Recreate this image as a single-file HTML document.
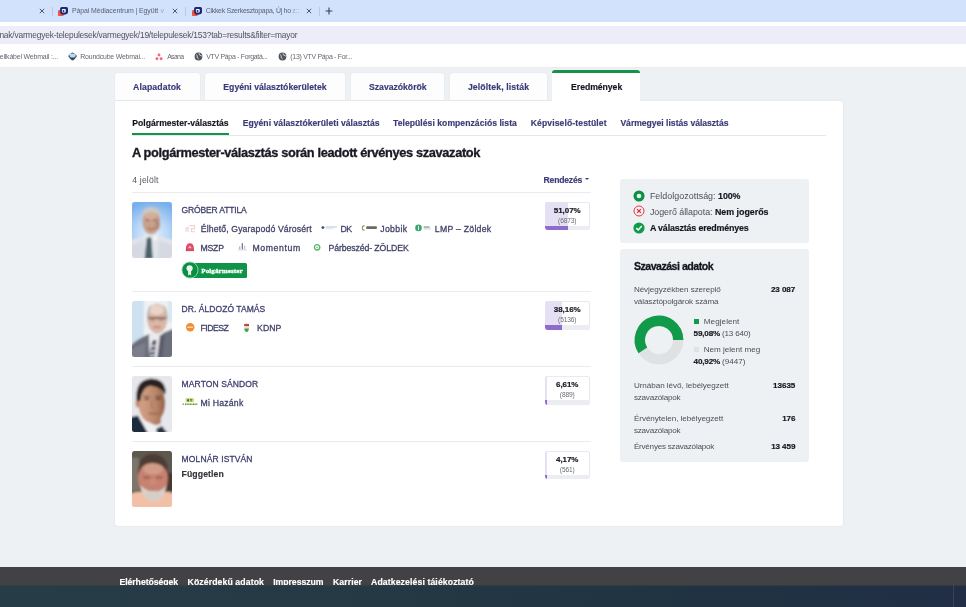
<!DOCTYPE html>
<html lang="hu"><head><meta charset="utf-8"><title>Eredmények</title><style>html,body{margin:0;padding:0}
body{width:966px;height:607px;position:relative;overflow:hidden;background:#fff;font-family:"Liberation Sans",sans-serif;}
#r{position:absolute;left:0;top:0;width:966px;height:607px;overflow:hidden;will-change:transform}
#r div,#r svg{position:absolute;display:block}
#r .t{white-space:nowrap;}
#r .t span{position:static}
</style></head><body><div id="r">
<div style="left:0.00px;top:0.00px;width:966.00px;height:21.50px;background:#d3e2fc;"></div>
<div style="left:0.00px;top:21.50px;width:966.00px;height:45.50px;background:#ffffff;"></div>
<div style="left:0.00px;top:26.20px;width:966.00px;height:18.20px;background:#ecedf8;"></div>
<svg style="left:37.60px;top:7.30px;" width="8" height="8" viewBox="0 0 8 8"><path d="M1.7999999999999998 1.7999999999999998L6.2 6.2M6.2 1.7999999999999998L1.7999999999999998 6.2" stroke="#46506a" stroke-width="0.95" fill="none"/></svg>
<svg style="left:171.20px;top:7.30px;" width="8" height="8" viewBox="0 0 8 8"><path d="M1.7999999999999998 1.7999999999999998L6.2 6.2M6.2 1.7999999999999998L1.7999999999999998 6.2" stroke="#46506a" stroke-width="0.95" fill="none"/></svg>
<svg style="left:304.80px;top:7.30px;" width="8" height="8" viewBox="0 0 8 8"><path d="M1.7999999999999998 1.7999999999999998L6.2 6.2M6.2 1.7999999999999998L1.7999999999999998 6.2" stroke="#46506a" stroke-width="0.95" fill="none"/></svg>
<div style="left:51.50px;top:7.40px;width:1.00px;height:8.20px;background:#c3c4e8;"></div>
<div style="left:185.30px;top:7.40px;width:1.00px;height:8.20px;background:#c3c4e8;"></div>
<div style="left:318.50px;top:7.40px;width:1.00px;height:8.20px;background:#c3c4e8;"></div>
<svg style="left:58.30px;top:6.80px;" width="10.5" height="9.5" viewBox="0 0 10.5 9.5"><rect x="0" y="2.9" width="5.6" height="6.3" rx="1.3" fill="#ee5346"/><path d="M2.100 1.600Q2.100 0 3.700 0H8.400Q10 0 10 1.600V5.200Q10 6.500 8.800 6.900L6.200 7.700Q2.100 7.900 2.100 4.800Z" fill="#1b2a6e"/><rect x="3.900" y="2" width="3.800" height="3.600" rx="0.800" fill="#ffffff"/><circle cx="5.500" cy="4.100" r="1" fill="#1b2a6e"/></svg>
<svg style="left:191.70px;top:6.80px;" width="10.5" height="9.5" viewBox="0 0 10.5 9.5"><rect x="0" y="2.9" width="5.6" height="6.3" rx="1.3" fill="#ee5346"/><path d="M2.100 1.600Q2.100 0 3.700 0H8.400Q10 0 10 1.600V5.200Q10 6.500 8.800 6.900L6.200 7.700Q2.100 7.900 2.100 4.800Z" fill="#1b2a6e"/><rect x="3.900" y="2" width="3.800" height="3.600" rx="0.800" fill="#ffffff"/><circle cx="5.500" cy="4.100" r="1" fill="#1b2a6e"/></svg>
<div class="t" style="left:71.90px;top:6.09px;font-size:6.95px;line-height:10px;color:#5a6071;letter-spacing:-0.101px;">Pápai Médiacentrum | Együtt</div>
<div class="t" style="left:160.50px;top:6.09px;font-size:6.95px;line-height:10px;color:#9aa6c4;">v</div>
<div class="t" style="left:205.70px;top:6.09px;font-size:6.95px;line-height:10px;color:#5a6071;letter-spacing:-0.267px;">Cikkek Szerkesztopapa, Új ho</div>
<div class="t" style="left:292.30px;top:6.09px;font-size:6.95px;line-height:10px;color:#9aa6c4;">z::</div>
<svg style="left:325.30px;top:7.30px;" width="8" height="8" viewBox="0 0 8 8"><path d="M4 0.6V7.4M0.6 4H7.4" stroke="#39404f" stroke-width="1.1" fill="none"/></svg>
<div class="t" style="left:-0.60px;top:28.99px;font-size:8.4px;line-height:12px;color:#50535b;letter-spacing:-0.195px;">nak/varmegyek-telepulesek/varmegyek/19/telepulesek/153?tab=results&amp;filter=mayor</div>
<div class="t" style="left:-0.30px;top:51.99px;font-size:6.95px;line-height:10px;color:#63676f;letter-spacing:-0.178px;">ellkábel Webmail :...</div>
<svg style="left:67.60px;top:51.60px;" width="9.5" height="9.5" viewBox="0 0 9.5 9.5"><path d="M4.6 0.6Q5.4 0.6 8.4 3.2Q9.200 4 8.400 4.900Q5.600 8.400 4.600 8.400T0.800 4.900Q0 4 0.800 3.200Q3.800 0.600 4.600 0.600Z" fill="#2d4a68"/><ellipse cx="4.600" cy="3.500" rx="3.100" ry="2" fill="#bcd8ef"/></svg>
<div class="t" style="left:80.30px;top:51.99px;font-size:6.95px;line-height:10px;color:#63676f;letter-spacing:-0.202px;">Roundcube Webmai...</div>
<svg style="left:154.60px;top:52.50px;" width="8" height="8" viewBox="0 0 8 8"><circle cx="4" cy="2" r="1.45" fill="#ee6a78"/><circle cx="1.9" cy="5.7" r="1.45" fill="#ee6a78"/><circle cx="6.1" cy="5.7" r="1.45" fill="#ee6a78"/></svg>
<div class="t" style="left:167.20px;top:51.99px;font-size:6.95px;line-height:10px;color:#63676f;letter-spacing:-0.702px;">Asana</div>
<svg style="left:193.50px;top:51.80px;" width="9" height="9" viewBox="0 0 9 9"><circle cx="4.5" cy="4.5" r="3.9" fill="#50545b"/><path d="M2.2 2.6Q3.6 3.4 3.2 4.6T4.6 6.9M5.2 1.2Q4.6 2.6 6 3.2T7.9 4.2" stroke="#fff" stroke-width="0.8" fill="none"/></svg>
<div class="t" style="left:206.30px;top:51.99px;font-size:6.95px;line-height:10px;color:#63676f;letter-spacing:-0.305px;">VTV Pápa - Forgatá...</div>
<svg style="left:277.70px;top:51.80px;" width="9" height="9" viewBox="0 0 9 9"><circle cx="4.5" cy="4.5" r="3.9" fill="#50545b"/><path d="M2.2 2.6Q3.6 3.4 3.2 4.6T4.6 6.9M5.2 1.2Q4.6 2.6 6 3.2T7.9 4.2" stroke="#fff" stroke-width="0.8" fill="none"/></svg>
<div class="t" style="left:290.30px;top:51.99px;font-size:6.95px;line-height:10px;color:#63676f;letter-spacing:-0.285px;">(13) VTV Pápa - For...</div>
<div style="left:0.00px;top:67.00px;width:966.00px;height:500.00px;background:#eef1f4;"></div>
<div style="left:0.00px;top:66.70px;width:966.00px;height:2.60px;background:linear-gradient(#ececec,#eef1f4);"></div>
<div style="left:115.40px;top:72.50px;width:84.20px;height:27.90px;background:#fdfdfe;border-radius:3px 3px 0 0;box-shadow:0 0 1.5px rgba(60,70,100,.13);"></div>
<div class="t" style="left:133.00px;top:81.09px;font-size:8.7px;line-height:12px;color:#3b3b78;font-weight:700;-webkit-text-stroke:0.16px currentColor;letter-spacing:0.123px;">Alapadatok</div>
<div style="left:205.00px;top:72.50px;width:139.90px;height:27.90px;background:#fdfdfe;border-radius:3px 3px 0 0;box-shadow:0 0 1.5px rgba(60,70,100,.13);"></div>
<div class="t" style="left:223.30px;top:81.09px;font-size:8.7px;line-height:12px;color:#3b3b78;font-weight:700;-webkit-text-stroke:0.16px currentColor;letter-spacing:-0.004px;">Egyéni választókerületek</div>
<div style="left:350.80px;top:72.50px;width:93.60px;height:27.90px;background:#fdfdfe;border-radius:3px 3px 0 0;box-shadow:0 0 1.5px rgba(60,70,100,.13);"></div>
<div class="t" style="left:369.00px;top:81.09px;font-size:8.7px;line-height:12px;color:#3b3b78;font-weight:700;-webkit-text-stroke:0.16px currentColor;letter-spacing:-0.030px;">Szavazókörök</div>
<div style="left:450.40px;top:72.50px;width:96.90px;height:27.90px;background:#fdfdfe;border-radius:3px 3px 0 0;box-shadow:0 0 1.5px rgba(60,70,100,.13);"></div>
<div class="t" style="left:467.90px;top:81.09px;font-size:8.7px;line-height:12px;color:#3b3b78;font-weight:700;-webkit-text-stroke:0.16px currentColor;letter-spacing:0.121px;">Jelöltek, listák</div>
<div style="left:115.40px;top:100.60px;width:727.50px;height:425.00px;background:#fff;border-radius:0 3px 3px 3px;box-shadow:0 0 2px rgba(60,70,100,.13);"></div>
<div style="left:552.40px;top:69.60px;width:87.90px;height:32.40px;background:#fff;border-radius:3px 3px 0 0;border-top:3px solid #15934a;box-sizing:border-box;"></div>
<div class="t" style="left:571.10px;top:81.09px;font-size:8.7px;line-height:12px;color:#15151f;font-weight:700;-webkit-text-stroke:0.16px currentColor;letter-spacing:-0.061px;">Eredmények</div>
<div style="left:132.30px;top:134.50px;width:694.00px;height:1.00px;background:#e4e6ea;"></div>
<div style="left:132.30px;top:132.50px;width:96.50px;height:2.70px;background:#15934a;"></div>
<div class="t" style="left:132.30px;top:117.32px;font-size:8.6px;line-height:12px;color:#15151f;font-weight:700;-webkit-text-stroke:0.16px currentColor;letter-spacing:0.015px;">Polgármester-választás</div>
<div class="t" style="left:242.70px;top:117.32px;font-size:8.6px;line-height:12px;color:#3b3b78;font-weight:700;-webkit-text-stroke:0.16px currentColor;letter-spacing:0.036px;">Egyéni választókerületi választás</div>
<div class="t" style="left:393.00px;top:117.32px;font-size:8.6px;line-height:12px;color:#3b3b78;font-weight:700;-webkit-text-stroke:0.16px currentColor;letter-spacing:0.044px;">Települési kompenzációs lista</div>
<div class="t" style="left:530.70px;top:117.32px;font-size:8.6px;line-height:12px;color:#3b3b78;font-weight:700;-webkit-text-stroke:0.16px currentColor;letter-spacing:0.113px;">Képviselő-testület</div>
<div class="t" style="left:620.40px;top:117.32px;font-size:8.6px;line-height:12px;color:#3b3b78;font-weight:700;-webkit-text-stroke:0.16px currentColor;letter-spacing:-0.013px;">Vármegyei listás választás</div>
<div class="t" style="left:132.00px;top:144.26px;font-size:12.8px;line-height:18px;color:#191922;font-weight:700;-webkit-text-stroke:0.16px currentColor;letter-spacing:-0.356px;-webkit-text-stroke:0.32px #191922;">A polgármester-választás során leadott érvényes szavazatok</div>
<div class="t" style="left:132.20px;top:173.52px;font-size:8.6px;line-height:12px;color:#55575e;letter-spacing:0.206px;">4 jelölt</div>
<div class="t" style="left:543.60px;top:173.52px;font-size:8.6px;line-height:12px;color:#3b3b78;font-weight:700;-webkit-text-stroke:0.16px currentColor;letter-spacing:-0.207px;">Rendezés</div>
<svg style="left:584.00px;top:177.30px;" width="6" height="5" viewBox="0 0 6 5"><path d="M1 1H5L3 3.1Z" fill="#3b3b78"/></svg>
<div style="left:132.30px;top:191.80px;width:458.60px;height:1.30px;background:#e9ebef;"></div>
<div style="left:132.30px;top:291.00px;width:458.60px;height:1.30px;background:#e9ebef;"></div>
<div style="left:132.30px;top:365.80px;width:458.60px;height:1.30px;background:#e9ebef;"></div>
<div style="left:132.30px;top:440.60px;width:458.60px;height:1.30px;background:#e9ebef;"></div>
<div style="left:544.8px;top:201.7px;width:44.9px;height:28.6px;border-radius:3px;overflow:hidden;background:#fff;box-shadow:inset 0 0 0 0.8px #e3e1ee;"><div style="left:0;top:0;width:23.30px;height:28.6px;background:#e5e0f3"></div><div style="left:0;top:24.200000000000003px;width:44.9px;height:4.4px;background:#ecedf2"></div><div style="left:0;top:24.200000000000003px;width:23.30px;height:4.4px;background:#8f6ccb"></div></div>
<div class="t" style="left:553.85px;top:204.73px;font-size:8.0px;line-height:11px;color:#15151f;font-weight:700;-webkit-text-stroke:0.16px currentColor;letter-spacing:-0.067px;">51,07%</div>
<div class="t" style="left:558.10px;top:215.91px;font-size:6.6px;line-height:9px;color:#6a6c74;letter-spacing:-0.156px;">(6873)</div>
<div style="left:544.8px;top:301.1px;width:44.9px;height:28.6px;border-radius:3px;overflow:hidden;background:#fff;box-shadow:inset 0 0 0 0.8px #e3e1ee;"><div style="left:0;top:0;width:17.47px;height:28.6px;background:#e5e0f3"></div><div style="left:0;top:24.200000000000003px;width:44.9px;height:4.4px;background:#ecedf2"></div><div style="left:0;top:24.200000000000003px;width:17.47px;height:4.4px;background:#8f6ccb"></div></div>
<div class="t" style="left:553.85px;top:304.13px;font-size:8.0px;line-height:11px;color:#15151f;font-weight:700;-webkit-text-stroke:0.16px currentColor;letter-spacing:-0.067px;">38,16%</div>
<div class="t" style="left:558.10px;top:315.31px;font-size:6.6px;line-height:9px;color:#6a6c74;letter-spacing:-0.156px;">(5136)</div>
<div style="left:544.8px;top:376.0px;width:44.9px;height:28.6px;border-radius:3px;overflow:hidden;background:#fff;box-shadow:inset 0 0 0 0.8px #e3e1ee;"><div style="left:0;top:0;width:2.60px;height:28.6px;background:#e5e0f3"></div><div style="left:0;top:24.200000000000003px;width:44.9px;height:4.4px;background:#ecedf2"></div><div style="left:0;top:24.200000000000003px;width:2.60px;height:4.4px;background:#8f6ccb"></div></div>
<div class="t" style="left:556.05px;top:379.03px;font-size:8.0px;line-height:11px;color:#15151f;font-weight:700;-webkit-text-stroke:0.16px currentColor;letter-spacing:-0.071px;">6,61%</div>
<div class="t" style="left:559.85px;top:390.21px;font-size:6.6px;line-height:9px;color:#6a6c74;letter-spacing:-0.152px;">(889)</div>
<div style="left:544.8px;top:450.7px;width:44.9px;height:28.6px;border-radius:3px;overflow:hidden;background:#fff;box-shadow:inset 0 0 0 0.8px #e3e1ee;"><div style="left:0;top:0;width:1.80px;height:28.6px;background:#e5e0f3"></div><div style="left:0;top:24.200000000000003px;width:44.9px;height:4.4px;background:#ecedf2"></div><div style="left:0;top:24.200000000000003px;width:1.80px;height:4.4px;background:#8f6ccb"></div></div>
<div class="t" style="left:556.05px;top:453.73px;font-size:8.0px;line-height:11px;color:#15151f;font-weight:700;-webkit-text-stroke:0.16px currentColor;letter-spacing:-0.071px;">4,17%</div>
<div class="t" style="left:559.85px;top:464.91px;font-size:6.6px;line-height:9px;color:#6a6c74;letter-spacing:-0.152px;">(561)</div>
<div class="t" style="left:181.60px;top:203.95px;font-size:8.5px;line-height:12px;color:#3e3e70;letter-spacing:-0.151px;-webkit-text-stroke:0.28px currentColor;">GRÓBER ATTILA</div>
<div class="t" style="left:181.60px;top:303.35px;font-size:8.5px;line-height:12px;color:#3e3e70;letter-spacing:0.053px;-webkit-text-stroke:0.28px currentColor;">DR. ÁLDOZÓ TAMÁS</div>
<div class="t" style="left:181.60px;top:378.05px;font-size:8.5px;line-height:12px;color:#3e3e70;letter-spacing:0.112px;-webkit-text-stroke:0.28px currentColor;">MARTON SÁNDOR</div>
<div class="t" style="left:181.60px;top:453.05px;font-size:8.5px;line-height:12px;color:#3e3e70;letter-spacing:0.123px;-webkit-text-stroke:0.28px currentColor;">MOLNÁR ISTVÁN</div>
<div class="t" style="left:200.80px;top:222.69px;font-size:8.7px;line-height:12px;color:#414169;letter-spacing:0.126px;-webkit-text-stroke:0.28px currentColor;">Élhető, Gyarapodó Városért</div>
<div class="t" style="left:340.40px;top:222.69px;font-size:8.7px;line-height:12px;color:#414169;letter-spacing:-0.486px;-webkit-text-stroke:0.28px currentColor;">DK</div>
<div class="t" style="left:380.20px;top:222.69px;font-size:8.7px;line-height:12px;color:#414169;letter-spacing:0.370px;-webkit-text-stroke:0.28px currentColor;">Jobbik</div>
<div class="t" style="left:434.80px;top:222.69px;font-size:8.7px;line-height:12px;color:#414169;letter-spacing:0.262px;-webkit-text-stroke:0.28px currentColor;">LMP – Zöldek</div>
<div class="t" style="left:200.60px;top:241.99px;font-size:8.7px;line-height:12px;color:#414169;letter-spacing:-0.256px;-webkit-text-stroke:0.28px currentColor;">MSZP</div>
<div class="t" style="left:252.50px;top:241.99px;font-size:8.7px;line-height:12px;color:#414169;letter-spacing:0.598px;-webkit-text-stroke:0.28px currentColor;">Momentum</div>
<div class="t" style="left:328.50px;top:241.99px;font-size:8.7px;line-height:12px;color:#414169;letter-spacing:-0.089px;-webkit-text-stroke:0.28px currentColor;">Párbeszéd- ZÖLDEK</div>
<div class="t" style="left:200.60px;top:321.59px;font-size:8.7px;line-height:12px;color:#414169;letter-spacing:-0.547px;-webkit-text-stroke:0.28px currentColor;">FIDESZ</div>
<div class="t" style="left:257.10px;top:321.59px;font-size:8.7px;line-height:12px;color:#414169;letter-spacing:0.009px;-webkit-text-stroke:0.28px currentColor;">KDNP</div>
<div class="t" style="left:200.60px;top:396.79px;font-size:8.7px;line-height:12px;color:#414169;letter-spacing:0.200px;-webkit-text-stroke:0.28px currentColor;">Mi Hazánk</div>
<div class="t" style="left:181.60px;top:467.89px;font-size:8.7px;line-height:12px;color:#33353b;font-weight:700;-webkit-text-stroke:0.16px currentColor;letter-spacing:0.079px;">Független</div>
<svg style="left:184.60px;top:223.60px;" width="11" height="10" viewBox="0 0 11 10"><path d="M1 8V4.6L3 3.2V8M4.5 1.6H9.5V4.6H6.3V7.8H9.8" stroke="#f1cfd3" stroke-width="1.1" fill="none"/></svg>
<svg style="left:321.20px;top:223.90px;" width="17" height="8" viewBox="0 0 17 8"><circle cx="1.9" cy="3.6" r="1.45" fill="#34507c"/><rect x="4.4" y="2.4" width="11.4" height="1.2" fill="#c3d0df"/><rect x="4.4" y="4.3" width="8" height="0.9" fill="#d9e1ea"/></svg>
<svg style="left:361.00px;top:224.30px;" width="17" height="8" viewBox="0 0 17 8"><path d="M3.6 1.6A2.3 2.3 0 1 0 3.6 6.2" stroke="#9a946e" stroke-width="1.1" fill="none"/><rect x="5.2" y="2.3" width="10.7" height="2.7" rx="0.8" fill="#6b6a66"/></svg>
<svg style="left:415.30px;top:223.20px;" width="17" height="10" viewBox="0 0 17 10"><circle cx="3.5" cy="4.9" r="3.3" fill="#3aa56c"/><rect x="3.0" y="2.8" width="1" height="4.2" fill="#d8f0e2"/><rect x="8.6" y="3.4" width="6" height="1.3" fill="#8b9a94"/><rect x="8.6" y="5.4" width="7.4" height="1" fill="#c3d4cc"/></svg>
<svg style="left:185.20px;top:241.60px;" width="11" height="10" viewBox="0 0 11 10"><path d="M0.9 7.1Q0.9 1.3 4.9 1.3T8.900 7.1Z" fill="#e04a62"/><path d="M2.900 6.3L4.900 3.600L6.900 6.3Z" fill="#f9b9c2"/><rect x="0.9" y="7.1" width="8" height="2" fill="#c9283f"/><rect x="1.6" y="7.800" width="6.600" height="0.5" fill="#f2a4ae"/></svg>
<svg style="left:236.50px;top:242.20px;" width="11" height="9" viewBox="0 0 11 9"><rect x="2.2" y="4.4" width="1.1" height="3" fill="#a4a6c8"/><rect x="4.7" y="1.2" width="1.3" height="6.2" fill="#74779f"/><rect x="7.2" y="3.6" width="1" height="3.8" fill="#b4b6d0"/><rect x="1" y="7.6" width="9" height="0.7" fill="#c4c6da"/></svg>
<svg style="left:313.20px;top:243.30px;" width="9" height="9" viewBox="0 0 9 9"><circle cx="4.1" cy="4.3" r="2.7" fill="none" stroke="#52b768" stroke-width="1.3"/><circle cx="4.1" cy="4.3" r="0.9" fill="#7ccb8a"/></svg>
<svg style="left:184.80px;top:322.10px;" width="11" height="11" viewBox="0 0 11 11"><circle cx="5.2" cy="5.2" r="4.2" fill="#f28d33"/><rect x="2.4" y="4.600" width="5.600" height="1.3" rx="0.5" fill="#fbd9b0"/></svg>
<svg style="left:242.50px;top:323.30px;" width="8" height="11" viewBox="0 0 8 11"><path d="M1.2 1H6V3.3H1.2Z" fill="#b8403c"/><path d="M1.2 3.3H6V5.600H1.2Z" fill="#eadfd8"/><path d="M1.2 5.600H6Q6 8.2 3.600 9.3Q1.2 8.2 1.2 5.600Z" fill="#4a9b52"/><path d="M2.800 0.5H4.400V1.3H2.800Z" fill="#c9a64a"/></svg>
<svg style="left:181.60px;top:396.80px;" width="17" height="10" viewBox="0 0 17 10"><path d="M3.6 5.3V2.4Q3.6 1.1 5 1.1H10.6Q12 1.1 12 2.4V5.3Z" fill="#c4dc86"/><path d="M5.2 2.2H7V4.400H5.2ZM8 2.2H10.2V3.1H8ZM8.600 3.1H9.600V4.600H8.600Z" fill="#4f6d22"/><path d="M0.6 7.2H2.2M3 7.2H15.6" stroke="#5f8a2c" stroke-width="1.5" stroke-dasharray="1.1 0.5"/></svg>
<div style="left:188px;top:262.5px;width:59.3px;height:15.2px;background:#0f9447;border-radius:1.5px;"></div>
<svg style="left:180.70px;top:261.10px;" width="18" height="18" viewBox="0 0 18 18"><circle cx="9" cy="9" r="8.1" fill="#0d8c43" stroke="#8fe3b3" stroke-width="0.9"/><circle cx="8.6" cy="7.3" r="3.1" fill="#e4f8ec"/><path d="M7.1 10V14.6L8.6 13.600L10.100 14.600V10Z" fill="#e4f8ec"/></svg>
<div class="t" style="left:201.30px;top:265.74px;font-size:7.1px;line-height:10px;color:#fff;font-weight:700;-webkit-text-stroke:0.16px currentColor;letter-spacing:0.072px;font-family:'Liberation Serif',serif;-webkit-text-stroke:0.3px #fff;">Polgármester</div>
<svg style="left:132.3px;top:201.7px;border-radius:2.5px;" width="40" height="56.2" viewBox="0 0 40 56.2"><defs><filter id="b201" x="-10%" y="-10%" width="120%" height="120%"><feGaussianBlur stdDeviation="0.85"/></filter><radialGradient id="g1" cx="20" cy="33" r="34" gradientUnits="userSpaceOnUse"><stop offset="0" stop-color="#e6f1fc"/><stop offset="0.45" stop-color="#bcd9f6"/><stop offset="1" stop-color="#78afec"/></radialGradient></defs><g filter="url(#b201)"><rect x="-3" y="-3" width="46" height="62" fill="url(#g1)"/><path d="M-3 60V38.500Q6 36.500 13 33.500L26 33.500Q34 36.500 43 38.500V60Z" fill="#e1e3ea"/><path d="M-3 60V44Q8 40 12 38L14 60ZM43 60V44Q32 40 27 38L25 60Z" fill="#d6d9e2"/><ellipse cx="19.2" cy="19.800" rx="8.8" ry="12.800" fill="#c9a08a"/><ellipse cx="18.500" cy="13.500" rx="6.500" ry="4" fill="#d4ad98"/><path d="M9.800 17Q9.200 5 19.200 5T28.800 17Q26.500 10.500 19.200 10.200T9.800 17Z" fill="#cbc7c5"/><path d="M13.800 18.200H17.200M21 18.200H24.500" stroke="#7d5d50" stroke-width="1.2"/><path d="M15.500 25.800Q19.500 28.800 23.500 25.800" stroke="#9c6a5c" stroke-width="1.3" fill="none"/><ellipse cx="25.500" cy="22" rx="2.500" ry="6" fill="#b88c78"/><path d="M13 33L19 36.500L26 33L24.500 38H14Z" fill="#f4f5f9"/><path d="M14.800 35.400H19.400L20.800 57H12.600Z" fill="#4b6368"/></g></svg>
<svg style="left:132.3px;top:301.1px;border-radius:2.5px;" width="40" height="56.2" viewBox="0 0 40 56.2"><defs><filter id="b301" x="-10%" y="-10%" width="120%" height="120%"><feGaussianBlur stdDeviation="0.85"/></filter></defs><g filter="url(#b301)"><rect x="-3" y="-3" width="46" height="62" fill="#eef2f6"/><rect x="-3" y="-3" width="15" height="45" fill="#cde1f0"/><rect x="36" y="-3" width="8" height="24" fill="#d8e7f2"/><path d="M-3 60V46Q4 38.500 16 33.500L31 32L43 27V60Z" fill="#6c6f7b"/><path d="M-3 60V50Q6 44 14 42L12 60Z" fill="#7b7e8a"/><path d="M17 33.500L31 31.500L26.500 57H17.500Z" fill="#ecebf0"/><path d="M28 34L33 33L30 58H25Z" fill="#5a5d69"/><path d="M20.500 39.500L24.500 39L22.500 58H16.500Z" fill="#4f5262"/><path d="M19.400 45.500L23.600 44.500M18.600 50.500L23 49.500M18 55L22.500 54" stroke="#e8e8ee" stroke-width="1.4"/><ellipse cx="25.200" cy="17.500" rx="10.200" ry="14.800" fill="#dbb6a6"/><ellipse cx="24.500" cy="9" rx="7.500" ry="5" fill="#ead3c8"/><path d="M14.800 16Q15.500 5.500 19.500 3.500Q16.800 10 16.400 18ZM35.600 16Q35 6 31 3.500Q34 10 34.200 18Z" fill="#b9b2ae"/><path d="M16 17H34.500" stroke="#5a4b48" stroke-width="1.500"/><path d="M18 17.800H22.800V20H18ZM26.500 17.800H31.500V20H26.500Z" fill="#b8948a"/><path d="M21.500 26.200H28.500" stroke="#a8685f" stroke-width="1.200"/></g></svg>
<svg style="left:132.3px;top:376.0px;border-radius:2.5px;" width="40" height="56.2" viewBox="0 0 40 56.2"><defs><filter id="b376" x="-10%" y="-10%" width="120%" height="120%"><feGaussianBlur stdDeviation="0.85"/></filter><linearGradient id="g3" x1="6" y1="0" x2="33" y2="0" gradientUnits="userSpaceOnUse"><stop offset="0" stop-color="#d2a188"/><stop offset="0.35" stop-color="#c9967b"/><stop offset="0.7" stop-color="#b58265"/><stop offset="1" stop-color="#955f45"/></linearGradient></defs><g filter="url(#b376)"><rect x="-3" y="-3" width="46" height="62" fill="#e6e7ea"/><path d="M5 39L13 37L31 58H16Z" fill="#f0eff2"/><path d="M-3 60V41.500L6 39.500L17.500 60Z" fill="#1f2a3e"/><path d="M14 36H29V47Q22 52 16 44Z" fill="#b07d62"/><ellipse cx="19.800" cy="27.500" rx="13.400" ry="19.500" fill="url(#g3)"/><ellipse cx="5.500" cy="27.500" rx="2" ry="4" fill="#c08a70"/><path d="M4.500 25Q2.500 4 19 2.500Q31.500 2.500 33.600 13Q34 17 32.800 19Q30 11 18 9.800Q9.800 11.500 8.200 25Z" fill="#2a2421"/><path d="M11.500 20.500H17.500M23 20.500H29.500" stroke="#4a3228" stroke-width="1.100"/><path d="M12.500 23H17M23.800 23H28.500" stroke="#5a3b2e" stroke-width="1.300"/><path d="M19.500 24V31.500H22.500" stroke="#a9775c" stroke-width="1.200" fill="none"/><path d="M16.500 37.500H26.500" stroke="#8e5a48" stroke-width="1.200"/><path d="M24 53L30 50L37.500 60H26Z" fill="#2b3446"/></g></svg>
<svg style="left:132.3px;top:450.7px;border-radius:2.5px;" width="40" height="56.2" viewBox="0 0 40 56.2"><defs><filter id="b450" x="-10%" y="-10%" width="120%" height="120%"><feGaussianBlur stdDeviation="0.85"/></filter></defs><g filter="url(#b450)"><rect x="-3" y="-3" width="46" height="62" fill="#5f5850"/><rect x="-3" y="7" width="10" height="33" fill="#7d756b"/><rect x="35" y="22" width="9" height="18" fill="#48382f"/><path d="M-3 60V43Q6 40 12 41L30 41Q36 40 43 43V60Z" fill="#f2c0a6"/><ellipse cx="21" cy="27" rx="14.800" ry="21" fill="#c7816f"/><path d="M6.500 24Q5 3 21 3T36 24Q33 12.500 21 12T6.500 24Z" fill="#4c3d35"/><ellipse cx="21" cy="18" rx="10" ry="5.500" fill="#d09c88"/><path d="M11.500 26.500H18M24 26.500H30.500" stroke="#8a4f44" stroke-width="1.300"/><ellipse cx="21" cy="31" rx="3" ry="3" fill="#d08a78"/><path d="M8.500 34Q10 49 21 50T34 34Q30 41.500 21 40.500T8.500 34Z" fill="#dbd2cd"/><path d="M15 37Q21 41 27 37" stroke="#b98a80" stroke-width="1.200" fill="none"/><ellipse cx="21" cy="45" rx="8.500" ry="5" fill="#d8cec8"/></g></svg>
<div style="left:620.40px;top:178.80px;width:188.60px;height:64.50px;background:#eef1f4;border-radius:3px;"></div>
<div style="left:620.40px;top:248.60px;width:188.60px;height:213.00px;background:#eef1f4;border-radius:3px;"></div>
<svg style="left:633.30px;top:189.50px;" width="12" height="12" viewBox="0 0 12 12"><circle cx="6" cy="6" r="3.95" fill="#e2f6ea" stroke="#0e8f45" stroke-width="3.2"/></svg>
<svg style="left:633.30px;top:205.30px;" width="12" height="12" viewBox="0 0 12 12"><circle cx="6" cy="6" r="5" fill="#fdeeee" stroke="#d2343f" stroke-width="0.95"/><path d="M4.1 4.1L7.9 7.900M7.9 4.1L4.1 7.900" stroke="#d2343f" stroke-width="1.25"/></svg>
<svg style="left:633.30px;top:221.60px;" width="12" height="12" viewBox="0 0 12 12"><circle cx="6" cy="6" r="5.6" fill="#119a4a"/><path d="M3.3 6.1L5.2 8L8.8 4.1" stroke="#fff" stroke-width="1.5" fill="none"/></svg>
<div class="t" style="left:649.90px;top:189.62px;font-size:8.9px;line-height:12px;"><span style="color:#4d4f56;letter-spacing:0.036px;">Feldolgozottság: </span><span style="color:#15151f;font-weight:700;-webkit-text-stroke:0.16px currentColor;letter-spacing:-0.141px;">100%</span></div>
<div class="t" style="left:649.90px;top:205.62px;font-size:8.9px;line-height:12px;"><span style="color:#4d4f56;letter-spacing:-0.036px;">Jogerő állapota: </span><span style="color:#15151f;font-weight:700;-webkit-text-stroke:0.16px currentColor;letter-spacing:-0.019px;">Nem jogerős</span></div>
<div class="t" style="left:649.90px;top:221.92px;font-size:8.9px;line-height:12px;color:#15151f;font-weight:700;-webkit-text-stroke:0.16px currentColor;letter-spacing:-0.166px;">A választás eredményes</div>
<div class="t" style="left:633.90px;top:259.03px;font-size:10.6px;line-height:15px;color:#15151f;font-weight:700;-webkit-text-stroke:0.16px currentColor;letter-spacing:-0.500px;-webkit-text-stroke:0.28px #15151f;">Szavazási adatok</div>
<div class="t" style="left:633.90px;top:284.49px;font-size:8.1px;line-height:11px;color:#4d4f56;letter-spacing:-0.060px;">Névjegyzékben szereplő</div>
<div class="t" style="left:633.90px;top:296.49px;font-size:8.1px;line-height:11px;color:#4d4f56;letter-spacing:-0.100px;">választópolgárok száma</div>
<div class="t" style="right:170.80px;top:284.49px;font-size:8.1px;line-height:11px;color:#15151f;font-weight:700;-webkit-text-stroke:0.16px currentColor;letter-spacing:-0.075px;">23 087</div>
<svg style="left:628.60px;top:309.90px;" width="60" height="60" viewBox="0 0 60 60"><circle cx="30" cy="30" r="19.2" fill="none" stroke="#dfe1e3" stroke-width="10.399999999999999"/><path d="M49.2 30A19.2 19.2 0 1 0 13.84 40.37" fill="none" stroke="#119a4a" stroke-width="10.399999999999999"/></svg>
<div style="left:693.60px;top:318.60px;width:5.20px;height:5.20px;background:#119a4a;"></div>
<div class="t" style="left:703.80px;top:316.09px;font-size:8.1px;line-height:11px;color:#4d4f56;letter-spacing:0.060px;">Megjelent</div>
<div class="t" style="left:693.60px;top:327.99px;font-size:8.1px;line-height:11px;"><span style="color:#15151f;font-weight:700;-webkit-text-stroke:0.16px currentColor;letter-spacing:-0.175px;">59,08% </span><span style="color:#4d4f56;letter-spacing:-0.221px;">(13 640)</span></div>
<div style="left:693.60px;top:347.00px;width:5.20px;height:5.20px;background:#dfe1e3;"></div>
<div class="t" style="left:703.80px;top:344.39px;font-size:8.1px;line-height:11px;color:#4d4f56;letter-spacing:-0.017px;">Nem jelent meg</div>
<div class="t" style="left:693.60px;top:355.79px;font-size:8.1px;line-height:11px;"><span style="color:#15151f;font-weight:700;-webkit-text-stroke:0.16px currentColor;letter-spacing:-0.175px;">40,92% </span><span style="color:#4d4f56;letter-spacing:-0.003px;">(9447)</span></div>
<div class="t" style="left:633.90px;top:380.39px;font-size:8.1px;line-height:11px;color:#4d4f56;letter-spacing:-0.041px;">Urnában lévő, lebélyegzett</div>
<div class="t" style="left:633.90px;top:392.19px;font-size:8.1px;line-height:11px;color:#4d4f56;letter-spacing:-0.216px;">szavazólapok</div>
<div class="t" style="right:170.70px;top:380.39px;font-size:8.1px;line-height:11px;color:#15151f;font-weight:700;-webkit-text-stroke:0.16px currentColor;letter-spacing:-0.056px;">13635</div>
<div class="t" style="left:633.90px;top:412.99px;font-size:8.1px;line-height:11px;color:#4d4f56;letter-spacing:-0.046px;">Érvénytelen, lebélyegzett</div>
<div class="t" style="left:633.90px;top:424.79px;font-size:8.1px;line-height:11px;color:#4d4f56;letter-spacing:-0.216px;">szavazólapok</div>
<div class="t" style="right:170.70px;top:412.99px;font-size:8.1px;line-height:11px;color:#15151f;font-weight:700;-webkit-text-stroke:0.16px currentColor;letter-spacing:-0.107px;">176</div>
<div class="t" style="left:633.90px;top:440.59px;font-size:8.1px;line-height:11px;color:#4d4f56;letter-spacing:-0.230px;">Érvényes szavazólapok</div>
<div class="t" style="right:170.70px;top:440.59px;font-size:8.1px;line-height:11px;color:#15151f;font-weight:700;-webkit-text-stroke:0.16px currentColor;letter-spacing:-0.095px;">13 459</div>
<div style="left:0.00px;top:566.90px;width:966.00px;height:18.00px;background:#424244;"></div>
<div class="t" style="left:119.40px;top:575.79px;font-size:8.7px;line-height:12px;color:#fff;font-weight:700;-webkit-text-stroke:0.16px currentColor;letter-spacing:-0.048px;">Elérhetőségek</div>
<div class="t" style="left:187.50px;top:575.79px;font-size:8.7px;line-height:12px;color:#fff;font-weight:700;-webkit-text-stroke:0.16px currentColor;letter-spacing:0.104px;">Közérdekű adatok</div>
<div class="t" style="left:273.20px;top:575.79px;font-size:8.7px;line-height:12px;color:#fff;font-weight:700;-webkit-text-stroke:0.16px currentColor;letter-spacing:-0.041px;">Impresszum</div>
<div class="t" style="left:333.00px;top:575.79px;font-size:8.7px;line-height:12px;color:#fff;font-weight:700;-webkit-text-stroke:0.16px currentColor;letter-spacing:0.078px;">Karrier</div>
<div class="t" style="left:371.00px;top:575.79px;font-size:8.7px;line-height:12px;color:#fff;font-weight:700;-webkit-text-stroke:0.16px currentColor;letter-spacing:0.106px;">Adatkezelési tájékoztató</div>
<div style="left:0.00px;top:584.60px;width:966.00px;height:23.00px;background:linear-gradient(90deg,#263c47 0%,#243944 40%,#203341 70%,#212e46 100%);"></div>
<div style="left:0.00px;top:584.60px;width:966.00px;height:2.20px;background:linear-gradient(rgba(66,66,68,.55),rgba(66,66,68,0));"></div>
<div style="left:952.50px;top:584.60px;width:1.00px;height:23.00px;background:rgba(255,255,255,.10);"></div>
</div></body></html>
